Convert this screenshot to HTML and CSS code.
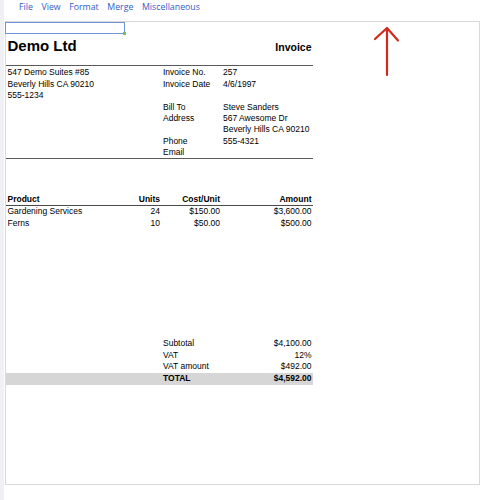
FILE: index.html
```html
<!DOCTYPE html>
<html>
<head>
<meta charset="utf-8">
<title>Invoice</title>
<link rel="stylesheet" href="styles.css">
</head>
<body>
<div class="app">
  <div class="rail"></div>
  <div class="main">
    <nav class="menu">
      <span class="menu-item">File</span>
      <span class="menu-item">View</span>
      <span class="menu-item">Format</span>
      <span class="menu-item">Merge</span>
      <span class="menu-item">Miscellaneous</span>
    </nav>
    <div class="sheet">
      <div class="sel-row"><div class="sel-cell"><span class="handle"></span></div></div>
      <div class="doc">
        <div class="title">
          <span class="company">Demo Ltd</span>
          <span class="doctype">Invoice</span>
        </div>
        <div class="info">
          <div class="c">547 Demo Suites #85</div><div class="c">Invoice No.</div><div class="c">257</div>
          <div class="c">Beverly Hills CA 90210</div><div class="c">Invoice Date</div><div class="c">4/6/1997</div>
          <div class="c">555-1234</div><div class="c"></div><div class="c"></div>
          <div class="c"></div><div class="c">Bill To</div><div class="c">Steve Sanders</div>
          <div class="c"></div><div class="c">Address</div><div class="c">567 Awesome Dr</div>
          <div class="c"></div><div class="c"></div><div class="c">Beverly Hills CA 90210</div>
          <div class="c"></div><div class="c">Phone</div><div class="c">555-4321</div>
          <div class="c"></div><div class="c">Email</div><div class="c"></div>
        </div>
        <div class="items">
          <div class="c hd">Product</div><div class="c hd r">Units</div><div class="c hd r">Cost/Unit</div><div class="c hd r">Amount</div>
          <div class="c">Gardening Services</div><div class="c r">24</div><div class="c r">$150.00</div><div class="c r">$3,600.00</div>
          <div class="c">Ferns</div><div class="c r">10</div><div class="c r">$50.00</div><div class="c r">$500.00</div>
        </div>
        <div class="totals">
          <div class="c lbl">Subtotal</div><div class="c r val">$4,100.00</div>
          <div class="c lbl">VAT</div><div class="c r val">12%</div>
          <div class="c lbl">VAT amount</div><div class="c r val">$492.00</div>
          <div class="total-row">
            <div class="c lbl b">TOTAL</div><div class="c r val b">$4,592.00</div>
          </div>
        </div>
      </div>
    </div>
    <svg class="arrow" width="34" height="56" viewBox="0 0 34 56">
      <path d="M17 51 L17 5 M5 15 L17 4 L28 16.5" fill="none" stroke="#d2291d" stroke-width="2.2" stroke-linecap="round" stroke-linejoin="round"/>
    </svg>
  </div>
</div>
</body>
</html>
```
FILE: styles.css
```css
html, body {
  margin: 0;
  padding: 0;
  background: #ffffff;
}
.app {
  display: flex;
  width: 490px;
  height: 500px;
}
.rail {
  width: 4px;
  height: 500px;
  background: #f0f1f4;
  flex: none;
}
.main {
  position: relative;
  flex: 1;
}
.menu {
  display: flex;
  gap: 8.5px;
  height: 21px;
  padding-left: 15px;
  box-sizing: border-box;
  font-family: "Open Sans", "Noto Sans", sans-serif;
  font-size: 8.8px;
  line-height: 15px;
  color: #2f5ec8;
}
.sheet {
  margin-left: 1px;
  width: 475px;
  height: 464px;
  box-sizing: border-box;
  border: 1px solid #d9d9d9;
  font-family: "Liberation Sans", Arial, sans-serif;
  font-size: 8.5px;
  color: #000;
}
.sel-row {
  height: 11.5px;
}
.sel-cell {
  position: relative;
  margin-left: -1px;
  width: 120px;
  height: 11.5px;
  box-sizing: border-box;
  border: 1px solid #6f93da;
}
.handle {
  position: absolute;
  right: -2px;
  bottom: -2px;
  width: 3px;
  height: 3px;
  background: #77c063;
}
.doc {
  width: 307px;
}
.c {
  padding: 0 1.5px;
  white-space: nowrap;
  overflow: visible;
}
.r {
  text-align: right;
}
.title {
  display: flex;
  justify-content: space-between;
  align-items: baseline;
  height: 31.5px;
  box-sizing: border-box;
  padding: 4px 1.5px 0;
}
.company {
  font-weight: bold;
  font-size: 15px;
  line-height: 15px;
}
.doctype {
  font-weight: bold;
  font-size: 10.5px;
  line-height: 15px;
}
.info {
  display: grid;
  grid-template-columns: 155.5px 60px 91.5px;
  grid-auto-rows: 11.45px;
  border-top: 1px solid #5a5a5a;
  border-bottom: 1px solid #5a5a5a;
}
.info .c {
  box-sizing: border-box;
  padding-top: 2.3px;
  line-height: 9.15px;
}
.items {
  display: grid;
  grid-template-columns: 110px 45.5px 60px 91.5px;
  grid-auto-rows: 11.7px;
  line-height: 11.7px;
  margin-top: 35.7px;
}
.hd {
  font-weight: bold;
  border-bottom: 1px solid #4a4a4a;
}
.totals {
  display: grid;
  grid-template-columns: 110px 45.5px 60px 91.5px;
  grid-auto-rows: 11.8px;
  line-height: 11.8px;
  margin-top: 108.5px;
}
.lbl {
  grid-column: 3 / 4;
}
.val {
  grid-column: 4 / 5;
}
.total-row {
  grid-column: 1 / 5;
  display: grid;
  grid-template-columns: 110px 45.5px 60px 91.5px;
  background: #d6d6d6;
}
.b {
  font-weight: bold;
}
.arrow {
  position: absolute;
  left: 366px;
  top: 24px;
}
```
